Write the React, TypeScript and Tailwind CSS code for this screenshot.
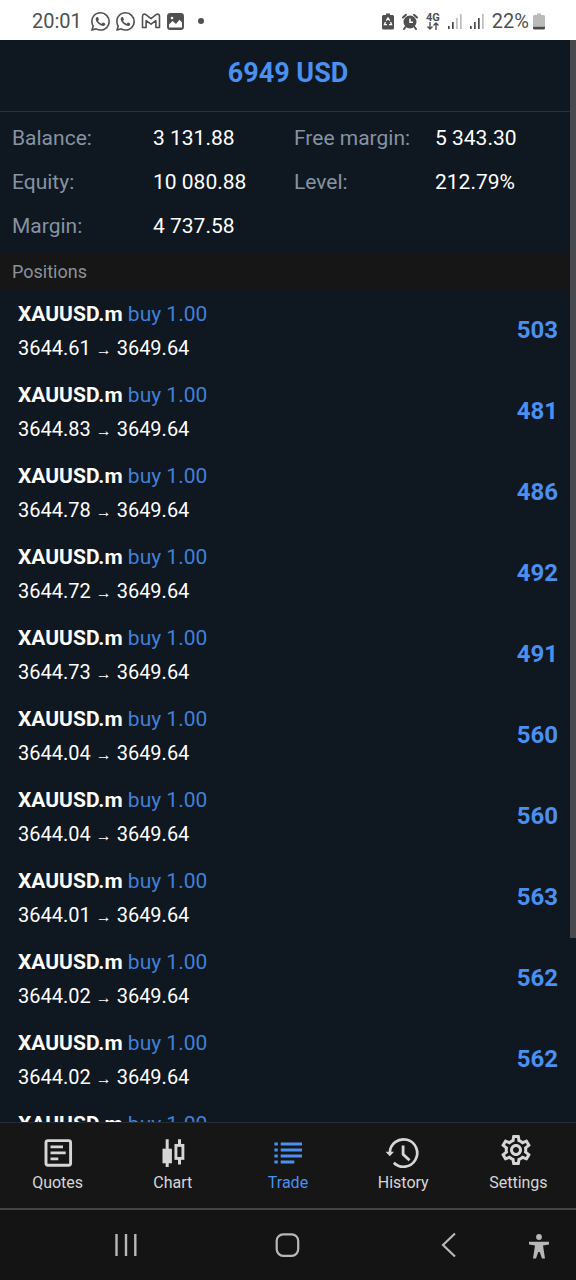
import type { ReactNode } from "react";
import { BsWhatsapp } from "react-icons/bs";
import { MdOutlineSettings } from "react-icons/md";

const summary = [
  ["Balance:", "3 131.88"],
  ["Free margin:", "5 343.30"],
  ["Equity:", "10 080.88"],
  ["Level:", "212.79%"],
  ["Margin:", "4 737.58"],
];

const positions = [
  { open: "3644.61", profit: "503" },
  { open: "3644.83", profit: "481" },
  { open: "3644.78", profit: "486" },
  { open: "3644.72", profit: "492" },
  { open: "3644.73", profit: "491" },
  { open: "3644.04", profit: "560" },
  { open: "3644.04", profit: "560" },
  { open: "3644.01", profit: "563" },
  { open: "3644.02", profit: "562" },
  { open: "3644.02", profit: "562" },
  { open: "3644.02", profit: "562" },
];

function GmailIcon() {
  return (
    <svg width="20" height="18" viewBox="0 0 20 18" fill="none" stroke="currentColor" strokeWidth="1.6" strokeLinejoin="round" aria-hidden="true">
      <path d="M1.500 15.500V4.200C1.500 2 3.500 1.600 4.900 2.700L10 6.700L15.100 2.700C16.500 1.600 18.500 2 18.500 4.200V15.500H14.900V8.700L10 12.200L5.100 8.700V15.500Z" />
    </svg>
  );
}

function PhotoIcon() {
  return (
    <svg width="17" height="17" viewBox="0 0 17 17" aria-hidden="true">
      <rect x="0.800" y="0.800" width="15.400" height="15.400" rx="2.500" fill="currentColor" stroke="currentColor" strokeWidth="1.500" />
      <path d="M2 11.500L5.500 8L9 11L12.500 6.800L15 9.500V14.500H2Z" fill="#fff" />
      <circle cx="5" cy="5" r="1.300" fill="#fff" />
    </svg>
  );
}

function PowerSaveIcon() {
  return (
    <svg width="12" height="17" viewBox="0 0 12 17" aria-hidden="true">
      <path d="M4 0.500H8V2H10.500Q12 2 12 3.500V15Q12 16.500 10.500 16.500H1.500Q0 16.500 0 15V3.500Q0 2 1.500 2H4Z" fill="currentColor" />
      <path d="M4.300 7.600L6 5L7.700 7.600M8.500 9L9.600 11.700H7M5 11.700H2.400L3.500 9" fill="none" stroke="#fff" strokeWidth="1.300" />
    </svg>
  );
}

function AlarmIcon() {
  return (
    <svg width="16" height="17" viewBox="0 0 16 17" aria-hidden="true">
      <circle cx="8" cy="9" r="6.500" fill="currentColor" />
      <path d="M1 4.500L4 1.800M15 4.500L12 1.800M3.500 14L2 16M12.500 14L14 16" stroke="currentColor" strokeWidth="2" strokeLinecap="round" />
      <path d="M8 5.500V9.300H11" fill="none" stroke="#fff" strokeWidth="1.500" />
    </svg>
  );
}

function NetworkIcon() {
  return (
    <span className="flex w-[14px] flex-col items-center text-[11px] leading-[9px] font-bold">
      4G
      <svg width="12" height="8" viewBox="0 0 12 8" fill="none" stroke="currentColor" strokeWidth="1.400" aria-hidden="true">
        <path d="M3 0V7M0.500 4.500L3 7L5.500 4.500M9 8V1M6.500 3.500L9 1L11.500 3.500" />
      </svg>
    </span>
  );
}

function SignalIcon({ bars }: { bars: number }) {
  return (
    <svg width="14" height="16" viewBox="0 0 14 16" aria-hidden="true">
      {[0, 1, 2, 3].map((i) => (
        <rect key={i} x={i * 4} y={13 - i * 4} width="1.700" height={3 + i * 4} fill={i < bars ? "#4a4a4a" : "#bdbdbd"} />
      ))}
    </svg>
  );
}

function BatteryIcon() {
  return (
    <svg width="12" height="17" viewBox="0 0 12 17" aria-hidden="true">
      <path d="M4 0.500H8V2H10.500Q12 2 12 3.500V13H0V3.500Q0 2 1.500 2H4Z" fill="#bababa" />
      <path d="M0 13.500H12V15Q12 16.500 10.500 16.500H1.500Q0 16.500 0 15Z" fill="#4a4a4a" />
    </svg>
  );
}

function StatusBar() {
  return (
    <header className="flex h-10 shrink-0 items-center justify-between bg-white pt-[2px] pr-[31px] pl-8 text-[#505050]">
      <div className="flex items-center gap-[6px]">
        <span className="mr-[3px] text-[20px] leading-6">20:01</span>
        <BsWhatsapp size={19} aria-hidden="true" />
        <BsWhatsapp size={19} aria-hidden="true" />
        <GmailIcon />
        <PhotoIcon />
        <span className="ml-2 size-[6px] rounded-full bg-current" />
      </div>
      <div className="flex items-center gap-[8px]">
        <PowerSaveIcon />
        <AlarmIcon />
        <NetworkIcon />
        <SignalIcon bars={2} />
        <SignalIcon bars={3} />
        <span className="flex items-center gap-[4px] text-[20px] leading-6">
          22%
          <BatteryIcon />
        </span>
      </div>
    </header>
  );
}

function TabSvg({ children }: { children: ReactNode }) {
  return (
    <svg width="36" height="36" viewBox="0 0 36 36" fill="none" stroke="currentColor" aria-hidden="true">
      {children}
    </svg>
  );
}

const tabs = [
  {
    label: "Quotes",
    icon: (
      <TabSvg>
        <rect x="6" y="6.600" width="24.600" height="24.600" rx="2" strokeWidth="2.900" />
        <path d="M10.500 12.800H23M10.500 18.800H25.700M10.500 24.900H18.300" strokeWidth="2.700" />
      </TabSvg>
    ),
  },
  {
    label: "Chart",
    icon: (
      <TabSvg>
        <path d="M12.200 5.300V33M24.500 5.300V11M24.500 25V30.500" strokeWidth="3" />
        <rect x="7.500" y="14.700" width="9.400" height="14.600" fill="currentColor" stroke="none" />
        <rect x="20.900" y="11.400" width="7" height="13" strokeWidth="2.900" />
      </TabSvg>
    ),
  },
  {
    label: "Trade",
    active: true,
    icon: (
      <TabSvg>
        <path d="M4.400 10H7.800M10.700 10H32M4.400 16H7.800M10.700 16H32M4.400 22H7.800M10.700 22H32M4.400 28H7.800M10.700 28H24.300" strokeWidth="3.200" />
      </TabSvg>
    ),
  },
  {
    label: "History",
    icon: (
      <TabSvg>
        <path d="M4.800 19A13.700 13.700 0 1 1 8.800 28.700" strokeWidth="2.700" />
        <path d="M0.600 17.700H9L4.800 22.200Z" fill="currentColor" stroke="none" />
        <path d="M18.100 11.500V20.300L24.500 26.300" strokeWidth="2.800" />
      </TabSvg>
    ),
  },
  {
    label: "Settings",
    icon: (
      <TabSvg>
        <MdOutlineSettings x={-2} y={-2} size={36} />
      </TabSvg>
    ),
  },
];

function TabBar() {
  return (
    <nav aria-label="Main" className="grid shrink-0 grid-cols-5 border-t border-[#262c33] bg-[#161616] pt-[11px] pb-3">
      {tabs.map((tab) => (
        <a
          key={tab.label}
          href={`#${tab.label.toLowerCase()}`}
          aria-current={tab.active ? "page" : undefined}
          className={`flex flex-col items-center text-[16px] leading-[26px] ${tab.active ? "text-[#4a90f0]" : "text-[#d6d6d6]"}`}
        >
          {tab.icon}
          {tab.label}
        </a>
      ))}
    </nav>
  );
}

function SystemButton({ label, children }: { label: string; children: ReactNode }) {
  return (
    <button type="button" aria-label={label} className="size-9">
      <svg width="36" height="36" viewBox="0 0 36 36" fill="none" stroke="currentColor" aria-hidden="true">
        {children}
      </svg>
    </button>
  );
}

function SystemBar() {
  return (
    <footer className="flex shrink-0 items-center gap-[54px] border-t-2 border-[#444444] bg-[#141414] py-[17px] pr-[19px] pl-[108px] text-[#b8b8b8]">
      <div className="flex flex-1 justify-between">
        <SystemButton label="Recent apps">
          <path d="M8.500 7V29M18 7V29M27.300 7V29" strokeWidth="2.400" />
        </SystemButton>
        <SystemButton label="Home">
          <rect x="6.700" y="7.300" width="21.500" height="21.500" rx="6.500" strokeWidth="2.200" />
        </SystemButton>
        <SystemButton label="Back">
          <path d="M24 6.500L12 18L24 29.500" strokeWidth="2.200" />
        </SystemButton>
      </div>
      <SystemButton label="Accessibility">
        <circle cx="18" cy="10" r="2.900" fill="currentColor" stroke="none" />
        <path d="M8 14.700H28V17.400L22 18.400L24 31.500H21L18.700 25H17.300L15 31.500H12L14 18.400L8 17.400Z" fill="currentColor" stroke="none" />
      </SystemButton>
    </footer>
  );
}

export default function App() {
  return (
    <div className="flex h-screen flex-col bg-[#0f1720] font-['Roboto',sans-serif] text-white">
      <StatusBar />
      <div className="relative flex min-h-0 flex-1 flex-col">
        <main className="min-h-0 flex-1 overflow-y-auto [scrollbar-width:none]">
          <h1 className="border-b border-[#29313a] pt-[17px] pb-[22px] text-center text-[27px] leading-8 font-bold text-[#4a90f0]">
            6949 USD
          </h1>
          <dl className="grid grid-cols-2 gap-y-5 pt-[14px] pb-[15px] pl-3 text-[21px] leading-6">
            {summary.map(([label, value]) => (
              <div key={label} className="grid grid-cols-2">
                <dt className="text-[#8593a3]">{label}</dt>
                <dd>{value}</dd>
              </div>
            ))}
          </dl>
          <h2 className="bg-[#161616] px-3 pt-[7px] pb-[6px] text-[18px] leading-6 text-[#8a929c]">Positions</h2>
          <ul>
            {positions.map((position, index) => (
              <li key={index} className="flex items-center justify-between px-[18px] pt-2 pb-[6px]">
                <div>
                  <p className="text-[21px] leading-[33px]">
                    <b>XAUUSD.m</b> <span className="text-[#4080d8]">buy 1.00</span>
                  </p>
                  <p className="text-[20px] leading-[34px]">
                    {position.open} <span className="text-[16px] leading-none">→</span> 3649.64
                  </p>
                </div>
                <span className="pb-[3px] text-[24px] leading-8 font-bold text-[#4a90f0]">{position.profit}</span>
              </li>
            ))}
          </ul>
        </main>
        <div className="absolute top-0 right-0 h-[83%] w-[6px] bg-[#484a4e]" />
      </div>
      <TabBar />
      <SystemBar />
    </div>
  );
}
